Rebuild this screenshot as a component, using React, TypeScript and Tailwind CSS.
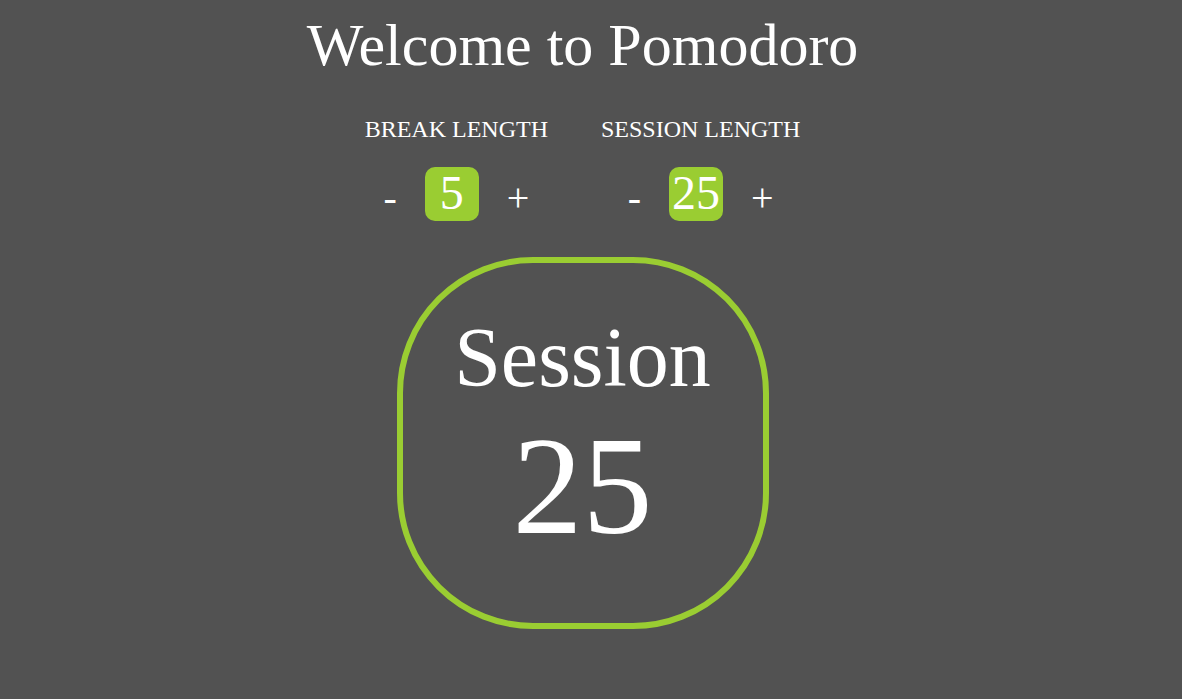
import React from "react";

function Control({ label, value }: { label: string; value: number }) {
  return (
    <div className="flex flex-col items-center">
      <div className="text-[24px] leading-[24px] whitespace-nowrap">{label}</div>
      <div className="mt-[26px] flex items-start gap-[28px]">
        <button className="mt-[11px] text-[40px] leading-none text-white">-</button>
        <div className="h-[54px] w-[54px] rounded-[10px] bg-[#9acd32] text-center text-[48px] leading-[52px]">
          {value}
        </div>
        <button className="mt-[11px] text-[40px] leading-none text-white">+</button>
      </div>
    </div>
  );
}

export default function App() {
  return (
    <div className="min-h-screen w-full bg-[#525252] text-white font-['Liberation_Serif','Times_New_Roman',serif]">
      <div className="flex w-[1165px] flex-col items-center pt-[15px]">
        <h1 className="text-[60px] leading-[60px] font-normal">Welcome to Pomodoro</h1>
        <div className="mt-[42px] flex items-start gap-[53px]">
          <Control label="BREAK LENGTH" value={5} />
          <Control label="SESSION LENGTH" value={25} />
        </div>
        <div className="mt-[36px] flex h-[372px] w-[372px] flex-col items-center rounded-[136px] border-[6px] border-[#9acd32] pt-[53px]">
          <div className="text-[84px] leading-[84px]">Session</div>
          <div className="mt-[16px] text-[140px] leading-[140px]">25</div>
        </div>
      </div>
    </div>
  );
}
